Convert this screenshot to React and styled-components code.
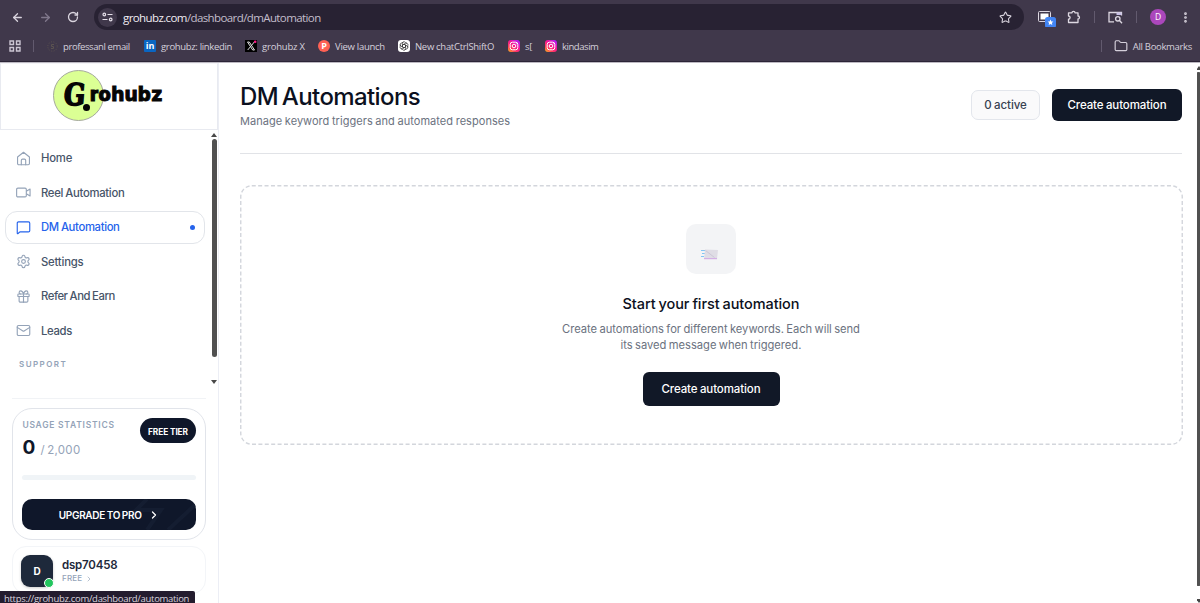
import React from "react";
import styled, { createGlobalStyle, css } from "styled-components";
import {
  ArrowLeft, ArrowRight, RotateCw, Star, EllipsisVertical, Folder,
  MessageSquare, Settings, Gift, Mail, ChevronRight,
} from "lucide-react";

const Global = createGlobalStyle`
  * { box-sizing: border-box; }
  body { margin: 0; overflow: hidden; background: #fff; font-family: "Inter", "Liberation Sans", sans-serif; }
  svg { display: block; flex: none; }
  h1, h2, p { margin: 0; }
  button { font-family: inherit; border: 0; padding: 0; }
`;

const Window = styled.div`
  width: 1200px; height: 603px; display: flex; flex-direction: column; position: relative; overflow: hidden;
`;

/* ---------- browser chrome ---------- */
const Chrome = styled.header`
  height: 63px; flex: none; background: #40384b; border-bottom: 1px solid #bdb9c2;
  box-shadow: inset 0 -1px 0 #2b2436;
  font-family: "Open Sans", "Noto Sans", sans-serif; color: #d5d0db; white-space: nowrap;
`;
const Toolbar = styled.div`
  height: 34px; display: flex; align-items: center; padding: 0 7px 0 11px; color: #d9d4de;
`;
const NavButtons = styled.div`
  display: flex; align-items: center; gap: 15px; width: 83px;
`;
const Omnibox = styled.div`
  width: 930px; height: 26px; border-radius: 13px; background: #282233;
  display: flex; align-items: center; padding: 0 12px 0 4px;
`;
const SiteInfo = styled.span`
  width: 19px; height: 19px; border-radius: 50%; background: #40384b; display: grid; place-items: center; margin-right: 6px;
`;
const Url = styled.span`
  flex: 1; padding-top: 1px; font-size: 11.5px; letter-spacing: -0.6px; color: #c3bdcb; line-height: 16px;
  b { font-weight: 400; color: #f0edf3; }
`;
const Tools = styled.div`
  flex: 1; display: flex; align-items: center; padding-left: 13px;
`;
const Tool = styled.span`
  display: flex; width: ${p => p.$w}px;
`;
const Rule = styled.i`
  width: 1px; height: 12px; background: #625a6e;
`;
const Profile = styled.span`
  width: 16px; height: 16px; border-radius: 50%; background: #ab47bc; color: #fff; font-size: 8.5px; line-height: 16px; text-align: center;
`;
const Bookmarks = styled.nav`
  height: 24px; display: flex; align-items: center; padding: 0 8px 0 9px; font-size: 9.5px;
`;
const Bookmark = styled.span`
  display: flex; align-items: center; gap: 5px; width: ${p => p.$w}px; letter-spacing: ${p => p.$ls || 0}px;
`;
const AllBookmarks = styled.span`
  margin-left: auto; display: flex; align-items: center; gap: 5px; letter-spacing: -0.32px;
  i { margin-right: 7px; }
`;
const Favicon = styled.span`
  width: 12px; height: 12px; flex: none; display: grid; place-items: center; letter-spacing: 0;
  border-radius: ${p => p.$r || 0}px; background: ${p => p.$bg || "transparent"};
  color: #fff; font: 700 9px/12px "Open Sans", sans-serif;
`;

/* ---------- page ---------- */
const Page = styled.div`
  flex: 1; display: flex; min-height: 0;
`;
const Sidebar = styled.aside`
  width: 219px; flex: none; border-right: 1px solid #eceef5; display: flex; flex-direction: column;
`;
const Brand = styled.div`
  height: 67px; flex: none; border: 1px solid #e8eaf0; border-top-color: #f5f5f8; padding: 6px 0 0 52px; display: flex;
`;
const BrandDisc = styled.span`
  width: 51px; height: 51px; border-radius: 50%; background: #dbff94; border: 1px solid #a5a99d;
  padding: 5px 0 0 10px; font: 700 30px/38px "DejaVu Serif", serif; color: #050505; -webkit-text-stroke: 1.6px #050505;
  position: relative; flex: none;
  span { display: inline-block; transform: scaleX(.84) skewX(-6deg); transform-origin: left; }
  i { position: absolute; left: 29px; top: 33px; width: 7px; height: 7px; border-radius: 50%; background: #050505; }
`;
const BrandName = styled.span`
  margin: 7px 0 0 -14px; z-index: 1; font: 800 20px/34px "Inter", sans-serif; letter-spacing: 0.6px;
  color: #050505; -webkit-text-stroke: 0.9px #050505;
`;
const NavArea = styled.div`
  height: 262px; display: flex; justify-content: space-between;
`;
const Nav = styled.nav`
  width: 205px; padding: 11.5px 0 0 5px;
`;
const NavItem = styled.a`
  height: 33px; margin-bottom: 1.5px; padding: 0 9px 0 10px; display: flex; align-items: center; gap: 10px;
  border: 1px solid transparent; border-radius: 12px; color: #475569; font-size: 11.3px; font-weight: 500;
  letter-spacing: ${p => p.$ls}px; word-spacing: -0.5px; white-space: nowrap;
  svg { color: #94a3b8; }
  ${p => p.$active && css`
    border-color: #e2e5ea; color: #2563eb;
    svg { color: #2563eb; }
    &::after { content: ""; width: 5px; height: 5px; border-radius: 50%; background: #2563eb; margin-left: auto; }
  `}
`;
const NavHeading = styled.div`
  margin: 11px 0 0 14px; font-size: 8px; line-height: 12px; font-weight: 600; letter-spacing: 1.45px; color: #94a3b8;
`;
const Scrollbar = styled.div`
  width: ${p => p.$w}px; flex: none; display: flex; flex-direction: column; align-items: center;
  padding-top: ${p => p.$pt}px; gap: ${p => p.$gap}px; overflow: hidden;
`;
const Arrow = styled.i`
  flex: none; width: 0; height: 0; border: 3px solid transparent;
  ${p => p.$down ? "border-top: 4px solid #484848; border-bottom: 0;" : "border-bottom: 4px solid #484848; border-top: 0;"}
`;
const Thumb = styled.i`
  flex: none; width: 5px; height: ${p => p.$h}px; background: #505050; border-radius: 3px; margin-bottom: ${p => p.$mb}px;
`;
const SideFoot = styled.div`
  margin: 6px 12px 0; border-top: 1px solid #f1f3f6; padding-top: 9px;
`;
const UsageCard = styled.section`
  height: 132px; border: 1px solid #e1e4ea; border-radius: 20px; padding: 9px 9px 0 9.4px;
`;
const UsageTop = styled.div`
  display: flex; justify-content: space-between; height: 57px;
`;
const UsageLabel = styled.div`
  font-size: 8.5px; line-height: 14px; font-weight: 600; letter-spacing: 0.75px; color: #94a3b8;
`;
const UsageCount = styled.div`
  margin-top: 3px; display: flex; align-items: baseline; gap: 5px; font-size: 11.5px; line-height: 25px; color: #94a3b8;
  letter-spacing: 0.25px; word-spacing: -1px;
  b { font-size: 19px; font-weight: 700; color: #0f172a; }
`;
const Tier = styled.span`
  width: 56px; height: 25px; border-radius: 13px; background: #0f172a; color: #fff; text-align: center;
  font-size: 8.3px; line-height: 29px; font-weight: 700; letter-spacing: -0.1px;
`;
const Meter = styled.div`
  height: 5px; border-radius: 3px; background: #f0f4f7;
`;
const Upgrade = styled.button`
  margin-top: 19px; width: 173.6px; height: 31px; border-radius: 10px; background: #0f172a; color: #fff;
  display: flex; align-items: center; justify-content: center; gap: 6px; position: relative; overflow: hidden;
  font-size: 10px; font-weight: 600; letter-spacing: -0.3px; word-spacing: -0.5px; white-space: nowrap;
  > svg:last-child { position: absolute; right: 0; top: 0; }
`;
const UpgradeLabel = styled.span`
  position: relative; z-index: 1; display: flex; align-items: center; gap: 6px;
`;
const UserCard = styled.section`
  margin-top: 6px; height: 48px; border: 1px solid #f3f5f8; border-radius: 14px; padding: 1px 8px 0; display: flex; align-items: center; gap: 9px;
`;
const Avatar = styled.span`
  position: relative; width: 32px; height: 32px; border-radius: 9px; background: #1e293b; color: #fff; text-align: center;
  font-size: 10px; line-height: 32px; font-weight: 700; box-shadow: 0 1px 3px #0003;
  i { position: absolute; right: -1px; bottom: -1px; width: 10px; height: 10px; border-radius: 50%; background: #22c55e; border: 1px solid #fff; }
`;
const UserName = styled.div`
  padding-top: 1px; font-size: 11.5px; line-height: 15px; font-weight: 600; color: #1e293b; letter-spacing: -0.2px;
`;
const Plan = styled.div`
  display: flex; align-items: center; gap: 3px; font-size: 8px; line-height: 11px; font-weight: 500; color: #94a3b8; letter-spacing: 0.2px;
`;
const Main = styled.main`
  flex: 1; padding: 0 15px 0 21px;
`;
const Header = styled.header`
  height: 91px; border-bottom: 1px solid #e1e3e7; display: flex; align-items: flex-start;
`;
const Heading = styled.div`
  flex: 1; padding-top: 17px;
`;
const Title = styled.h1`
  font-size: 24px; line-height: 33px; font-weight: 500; letter-spacing: -0.6px; word-spacing: -2px; color: #0b1020;
`;
const Subtitle = styled.p`
  font-size: 11px; line-height: 16px; color: #6b7280; letter-spacing: 0.05px; word-spacing: -0.6px;
`;
const Count = styled.span`
  margin: 27px 12px 0 0; width: 69px; height: 30px; border: 1px solid #e3e6ec; border-radius: 7px; background: #fafafb;
  color: #374151; font-size: 11.5px; line-height: 28px; text-align: center; font-weight: 500; letter-spacing: -0.1px; word-spacing: -0.5px;
`;
const Primary = styled.button`
  width: ${p => p.$w}px; height: ${p => p.$h}px; margin-top: ${p => p.$mt}px; border-radius: 6px; background: #111827; color: #fff;
  font-size: 11.5px; font-weight: 500; letter-spacing: -0.1px; word-spacing: -0.5px;
`;
const Empty = styled.section`
  margin-top: 31px; height: 260px; display: flex; flex-direction: column; align-items: center;
  padding-top: 39px; text-align: center; position: relative;
  > svg:first-child { position: absolute; inset: 0; }
`;
const IconTile = styled.div`
  width: 50px; height: 50px; border-radius: 10px; background: #f3f4f6; padding: 24px 0 0 14px;
`;
const EmptyTitle = styled.h2`
  margin-top: 20px; font-size: 14.5px; line-height: 20px; font-weight: 500; color: #0b1020; letter-spacing: -0.08px; word-spacing: -0.8px;
`;
const EmptyText = styled.p`
  margin-top: 7px; font-size: 11.2px; line-height: 16px; color: #6b7280; letter-spacing: -0.03px; word-spacing: -0.7px;
`;
const StatusBubble = styled.div`
  position: absolute; left: 0; bottom: 0; width: 195px; height: 12px; background: #231c2e; border-radius: 0 2px 0 0; padding-left: 4px;
  color: #d8d3de; font: 9.5px/16px "Open Sans", "Noto Sans", sans-serif; white-space: nowrap; letter-spacing: -0.3px;
`;

/* ---------- icons ---------- */
const Insta = ({ id }) => (
  <svg width="12" height="12" viewBox="0 0 12 12" fill="none">
    <defs>
      <linearGradient id={id} x1="0" y1="1" x2=".8" y2="0">
        <stop offset="0" stopColor="#ffc21a" /><stop offset=".3" stopColor="#ff3d5a" />
        <stop offset=".65" stopColor="#f5129c" /><stop offset="1" stopColor="#b01cf5" />
      </linearGradient>
    </defs>
    <rect width="12" height="12" rx="3" fill={`url(#${id})`} />
    <rect x="2.2" y="2.2" width="7.6" height="7.6" rx="2.2" stroke="#fff" />
    <circle cx="6" cy="6" r="1.8" stroke="#fff" /><circle cx="8.2" cy="3.8" r=".5" fill="#fff" />
  </svg>
);
const HomeIcon = () => (
  <svg width="15" height="15" viewBox="0 0 24 24" fill="none" stroke="currentColor" strokeWidth="1.8" strokeLinejoin="round" strokeLinecap="round">
    <path d="M2.5 9.5 12 2l9.5 7.5V20a2 2 0 0 1-2 2h-15a2 2 0 0 1-2-2z" />
    <path d="M8.5 22v-7a2 2 0 0 1 2-2h3a2 2 0 0 1 2 2v7" />
  </svg>
);
const VideoIcon = () => (
  <svg width="15" height="15" viewBox="0 0 24 24" fill="none" stroke="currentColor" strokeWidth="1.8" strokeLinejoin="round">
    <rect x="1" y="5" width="15.5" height="14" rx="2" /><path d="m16.5 10 6-3.500v11l-6-3.500" />
  </svg>
);

export default function App() {
  const ic = { size: 15, strokeWidth: 1.8 };
  return (
    <>
      <Global />
      <Window>
        <Chrome>
          <Toolbar>
            <NavButtons>
              <ArrowLeft size={13} strokeWidth={2.4} />
              <ArrowRight size={13} strokeWidth={2.4} color="#80788c" />
              <RotateCw size={12} strokeWidth={2.6} />
            </NavButtons>
            <Omnibox>
              <SiteInfo>
                <svg width="11" height="10" viewBox="0 0 11 10" fill="none" stroke="#e5e0ea" strokeWidth="1.2">
                  <circle cx="2.3" cy="2.5" r="1.3" /><path d="M5.5 2.5h5M.5 7.5h5" /><circle cx="8.7" cy="7.5" r="1.3" />
                </svg>
              </SiteInfo>
              <Url><b>grohubz.com</b>/dashboard/dmAutomation</Url>
              <Star size={13} strokeWidth={2} />
            </Omnibox>
            <Tools>
              <Tool $w={30}>
                <svg width="20" height="20" viewBox="0 0 20 20" fill="none">
                  <rect x="1.5" y="4.5" width="12" height="10" rx="1" stroke="#ddd8e2" />
                  <rect x="3.5" y="6.5" width="8" height="6" fill="#fff" />
                  <rect x="8" y="10" width="11" height="11" rx="2.5" fill="#4285f4" />
                  <path d="m13.500 12.500.9 1.900 2 .2-1.500 1.400.4 2-1.800-1-1.800 1 .4-2-1.500-1.400 2-.2z" fill="#fff" />
                </svg>
              </Tool>
              <Tool $w={27}>
                <svg width="14" height="14" viewBox="0 0 14 14" fill="none" stroke="#ddd8e2" strokeWidth="1.3" strokeLinejoin="round">
                  <path d="M1.5 2.800H5a1.500 1.500 0 0 1 3 0h3V6a1.500 1.500 0 0 1 0 3v3.500H1.500V9.200a1.600 1.600 0 0 0 0-3.200z" />
                </svg>
              </Tool>
              <Tool $w={14}><Rule /></Tool>
              <Tool $w={28}>
                <svg width="15" height="13" viewBox="0 0 15 13" fill="none" stroke="#ddd8e2" strokeWidth="1.3">
                  <path d="M6 10.800H1V1.500h12.500v3" /><path d="M8.500 1.500h5v2.500h-5z" fill="#c9c1e6" stroke="none" />
                  <circle cx="9.8" cy="7.8" r="2.2" /><path d="m11.500 9.500 2.500 2.700" />
                </svg>
              </Tool>
              <Tool $w={14}><Rule /></Tool>
              <Tool $w={29}><Profile>D</Profile></Tool>
              <EllipsisVertical size={13} strokeWidth={3} />
            </Tools>
          </Toolbar>
          <Bookmarks>
            <Bookmark $w={24}>
              <svg width="12" height="12" viewBox="0 0 12 12" fill="none" stroke="#ccc6d3" strokeWidth="1.4">
                <path d="M1 1h3.500v3.500H1zM7.500 1H11v3.500H7.500zM1 7.500h3.500V11H1zM7.500 7.500H11V11H7.500z" />
              </svg>
            </Bookmark>
            <Bookmark $w={13}><Rule /></Bookmark>
            <Bookmark $w={98} $ls={-0.4}>
              <Favicon><svg width="11" height="11" viewBox="0 0 11 11" fill="none" stroke="#5b5350"><circle cx="5.5" cy="5.5" r="4.7" strokeDasharray="1 1.5" /><path d="M7 3.500H4.500v2h2v2H4" /></svg></Favicon>
              professanl email
            </Bookmark>
            <Bookmark $w={101} $ls={-0.33}><Favicon $bg="#0a66c2" $r={1}>in</Favicon>grohubz: linkedin</Bookmark>
            <Bookmark $w={73} $ls={-0.2}>
              <Favicon $bg="#000">
                <svg width="12" height="12" viewBox="0 0 12 12" fill="none" stroke="#ddd"><path d="M2.500 2h1.800l5.200 8H7.700zM9.300 2 2.700 10" /><circle cx="10.2" cy="1.8" r="1.3" fill="#f91880" stroke="none" /></svg>
              </Favicon>grohubz X
            </Bookmark>
            <Bookmark $w={80} $ls={-0.28}><Favicon $bg="#ff6154" $r={6}>P</Favicon>View launch</Bookmark>
            <Bookmark $w={110} $ls={-0.3}>
              <Favicon $bg="#fff" $r={3}>
                <svg width="10" height="10" viewBox="0 0 10 10" fill="none" stroke="#333" strokeWidth=".7">
                  {[0, 60, 120, 180, 240, 300].map(a => <path key={a} transform={`rotate(${a} 5 5)`} d="M3.400 4.200V2.200a1.700 1.700 0 0 1 3-.8L8 2.600M3.400 4.200 5 3.200l1.700 1" />)}
                </svg>
              </Favicon>New chatCtrlShiftO
            </Bookmark>
            <Bookmark $w={37} $ls={-0.3}><Insta id="ig1" />s[</Bookmark>
            <Bookmark $w={80} $ls={-0.45}><Insta id="ig2" />kindasim</Bookmark>
            <AllBookmarks><Rule /><Folder size={14} strokeWidth={2} />All Bookmarks</AllBookmarks>
          </Bookmarks>
        </Chrome>

        <Page>
          <Sidebar>
            <Brand>
              <BrandDisc><span>G</span><i /></BrandDisc>
              <BrandName>rohubz</BrandName>
            </Brand>
            <NavArea>
              <Nav>
                <NavItem $ls={-0.2}><HomeIcon />Home</NavItem>
                <NavItem $ls={-0.3}><VideoIcon />Reel Automation</NavItem>
                <NavItem $ls={-0.35} $active><MessageSquare {...ic} />DM Automation</NavItem>
                <NavItem $ls={-0.2}><Settings {...ic} />Settings</NavItem>
                <NavItem $ls={-0.45}><Gift {...ic} />Refer And Earn</NavItem>
                <NavItem $ls={-0.35}><Mail {...ic} />Leads</NavItem>
                <NavHeading>SUPPORT</NavHeading>
              </Nav>
              <Scrollbar $w={8} $pt={3} $gap={2}>
                <Arrow />
                <Thumb $h={218} $mb={21} />
                <Arrow $down />
              </Scrollbar>
            </NavArea>
            <SideFoot>
              <UsageCard>
                <UsageTop>
                  <div>
                    <UsageLabel>USAGE STATISTICS</UsageLabel>
                    <UsageCount><b>0</b>/ 2,000</UsageCount>
                  </div>
                  <Tier>FREE TIER</Tier>
                </UsageTop>
                <Meter />
                <Upgrade>
                  <UpgradeLabel>UPGRADE TO PRO<ChevronRight size={12} strokeWidth={2.6} /></UpgradeLabel>
                  <svg width="66" height="31" viewBox="0 0 66 31" fill="none" stroke="#141d31" strokeWidth="4"><path d="M17 0 6 11h25L17 31M66 5 38 31" /></svg>
                </Upgrade>
              </UsageCard>
              <UserCard>
                <Avatar>D<i /></Avatar>
                <div>
                  <UserName>dsp70458</UserName>
                  <Plan>FREE <ChevronRight size={8} /></Plan>
                </div>
              </UserCard>
            </SideFoot>
          </Sidebar>

          <Main>
            <Header>
              <Heading>
                <Title>DM Automations</Title>
                <Subtitle>Manage keyword triggers and automated responses</Subtitle>
              </Heading>
              <Count>0 active</Count>
              <Primary $w={130} $h={32} $mt={26}>Create automation</Primary>
            </Header>
            <Empty>
              <svg width="943" height="260" fill="none"><rect x=".75" y=".75" width="941.5" height="258.5" rx="11" stroke="#d3d6dc" strokeWidth="1.4" strokeDasharray="4 2.4" /></svg>
              <IconTile>
                <svg width="20" height="13" viewBox="0 0 20 13" fill="none">
                  <path d="M1 2.500h4M2 5.500h3M1 8.500h3" stroke="#83c5f3" />
                  <path d="m5 1.500 13 .5-1 9H4z" fill="#dfdde5" />
                  <path d="m5.500 2.500 9 7" stroke="#c6c0d2" strokeWidth=".8" />
                  <path d="M4 10.700h13" stroke="#d0a5e5" />
                </svg>
              </IconTile>
              <EmptyTitle>Start your first automation</EmptyTitle>
              <EmptyText>Create automations for different keywords. Each will send<br />its saved message when triggered.</EmptyText>
              <Primary $w={137} $h={34} $mt={19}>Create automation</Primary>
            </Empty>
          </Main>
          <Scrollbar $w={3} $pt={3} $gap={2}>
            <Arrow />
            <Thumb $h={514} $mb={11} />
            <Arrow $down />
          </Scrollbar>
        </Page>
        <StatusBubble>https://grohubz.com/dashboard/automation</StatusBubble>
      </Window>
    </>
  );
}
